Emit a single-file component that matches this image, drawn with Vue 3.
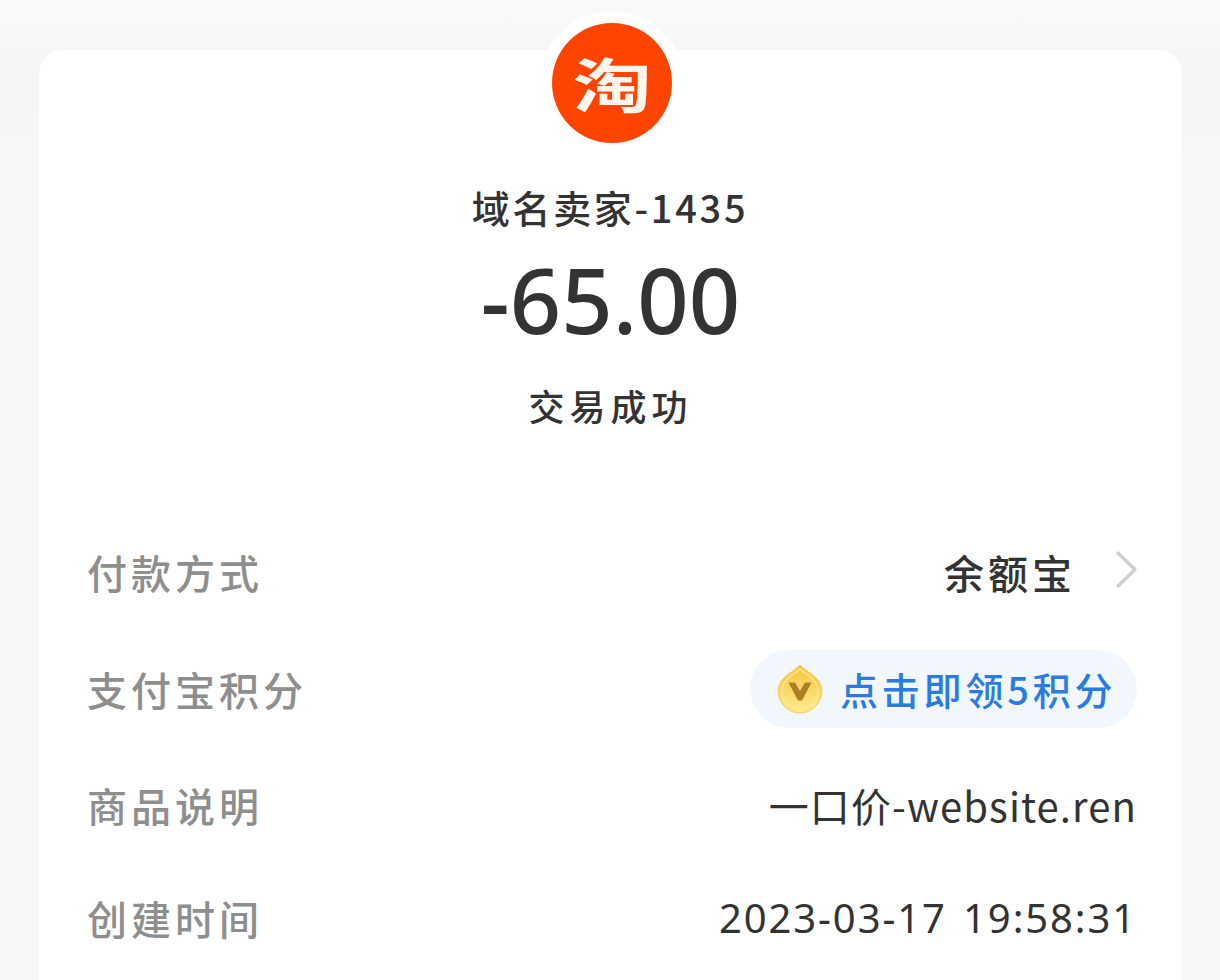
<script setup>
const rows = [
  { label: '付款方式', kind: 'pay', value: '余额宝' },
  { label: '支付宝积分', kind: 'pill', value: '点击即领5积分' },
  { label: '商品说明', kind: 'text', value: '一口价-website.ren' },
  { label: '创建时间', kind: 'time', value: '2023-03-17 19:58:31' }
]
</script>

<template>
  <div class="page">
    <div class="card">
      <div class="avatar">
        <div class="logo"><span class="logo-char">淘</span></div>
      </div>
      <div class="name">域名卖家-1435</div>
      <div class="amount">-65.00</div>
      <div class="status">交易成功</div>
      <div class="rows">
        <div v-for="r in rows" :key="r.label" class="row" :class="'row-' + r.kind">
          <div class="label">{{ r.label }}</div>
          <div v-if="r.kind === 'pay'" class="pay">
            <span class="pay-text">{{ r.value }}</span>
            <svg class="chev" width="24" height="40" viewBox="0 0 24 40">
              <path d="M3 3 L20 19.5 L3 36" fill="none" stroke="#cfcfcf" stroke-width="3.4" stroke-linecap="round" stroke-linejoin="round" />
            </svg>
          </div>
          <div v-else-if="r.kind === 'pill'" class="pill">
            <svg class="coin" width="46" height="50" viewBox="0 0 46 50">
              <defs>
                <linearGradient id="coinFill" x1="0" y1="0" x2="0" y2="1">
                  <stop offset="0" stop-color="#f6c63f" />
                  <stop offset="1" stop-color="#fde98f" />
                </linearGradient>
              </defs>
              <path d="M23 1 C27 7 45 12 45 27 C45 39 35 49 23 49 C11 49 1 39 1 27 C1 12 19 7 23 1 Z" fill="url(#coinFill)" stroke="#f5cb58" stroke-width="1" />
              <path d="M23 5 C28 10 41 15 41 27 C41 37 33 45 23 45 C13 45 5 37 5 27 C5 15 18 10 23 5 Z" fill="none" stroke="#fbe8a0" stroke-width="1.2" />
              <path d="M11.5 18.5 H18 L23 27 L28 18.5 H34.5 L25 36.5 H21 Z" fill="#ac7f22" />
            </svg>
            <span class="pill-text">{{ r.value }}</span>
          </div>
          <div v-else class="value" :class="'value-' + r.kind">{{ r.value }}</div>
        </div>
      </div>
    </div>
  </div>
</template>

<style>
html, body { margin: 0; padding: 0; background: #f7f7f7; }
</style>

<style scoped>
.page {
  width: 1220px;
  height: 980px;
  overflow: hidden;
  box-sizing: border-box;
  padding: 50px 38px 0 39px;
  background: linear-gradient(180deg, #fafafa 0, #f5f5f5 60px, #f7f7f7 200px);
  font-family: "Noto Sans CJK SC", "Noto Sans", sans-serif;
  font-weight: 500;
}
.card {
  position: relative;
  height: 960px;
  background: #fff;
  border-radius: 24px;
  display: flex;
  flex-direction: column;
  align-items: center;
  padding-top: 133px;
  box-sizing: border-box;
}
.avatar {
  position: absolute;
  left: 501px;
  top: -39px;
  width: 144px;
  height: 144px;
  border-radius: 50%;
  background: #fff;
  display: flex;
  align-items: center;
  justify-content: center;
}
.logo {
  width: 120px;
  height: 120px;
  border-radius: 50%;
  background: #ff4400;
  display: flex;
  align-items: center;
  justify-content: center;
}
.logo-char {
  color: #fff6ee;
  font-size: 72px;
  line-height: 1;
  font-weight: 700;
  transform: scale(1.1, 0.82);
}
.name {
  color: #333;
  font-size: 38px;
  line-height: 48px;
  letter-spacing: 2.7px;
  margin-right: 1px;
}
.amount {
  color: #333;
  font-family: "Noto Sans", sans-serif;
  font-size: 90px;
  line-height: 100px;
  margin-top: 18px;
}
.status {
  color: #333;
  font-size: 36px;
  line-height: 46px;
  letter-spacing: 5px;
  margin-top: 33px;
}
.rows {
  align-self: stretch;
  margin-top: 114px;
  padding: 0 45px 0 48px;
  display: flex;
  flex-direction: column;
}
.row {
  display: flex;
  align-items: center;
  justify-content: space-between;
}
.row-pay { height: 60px; }
.row-pill { height: 78px; margin-top: 48px; }
.row-text { height: 60px; margin-top: 47px; }
.row-time { height: 60px; margin-top: 53px; }
.label {
  color: #8e8e8e;
  font-size: 40px;
  line-height: 60px;
  letter-spacing: 4px;
}
.pay {
  display: flex;
  align-items: center;
}
.pay-text {
  color: #333;
  font-size: 40px;
  line-height: 60px;
  letter-spacing: 4px;
}
.chev {
  margin-left: 39px;
  margin-right: -2px;
  margin-top: -4px;
}
.pill {
  height: 78px;
  width: 387px;
  box-sizing: border-box;
  border-radius: 39px;
  background: #f2f7fd;
  display: flex;
  align-items: center;
  padding-left: 27px;
}
.coin { flex: none; }
.pill-text {
  color: #2a7ce0;
  font-size: 38px;
  line-height: 48px;
  letter-spacing: 3.8px;
  margin-left: 17px;
  white-space: nowrap;
}
.value {
  color: #333;
  font-size: 40px;
  line-height: 60px;
  white-space: nowrap;
}
.value-text { letter-spacing: 1.1px; font-weight: 400; }
.value-time {
  font-family: "Noto Sans", sans-serif;
  font-weight: 400;
  font-size: 40px;
  letter-spacing: 1.9px;
  word-spacing: 4px;
}
</style>
